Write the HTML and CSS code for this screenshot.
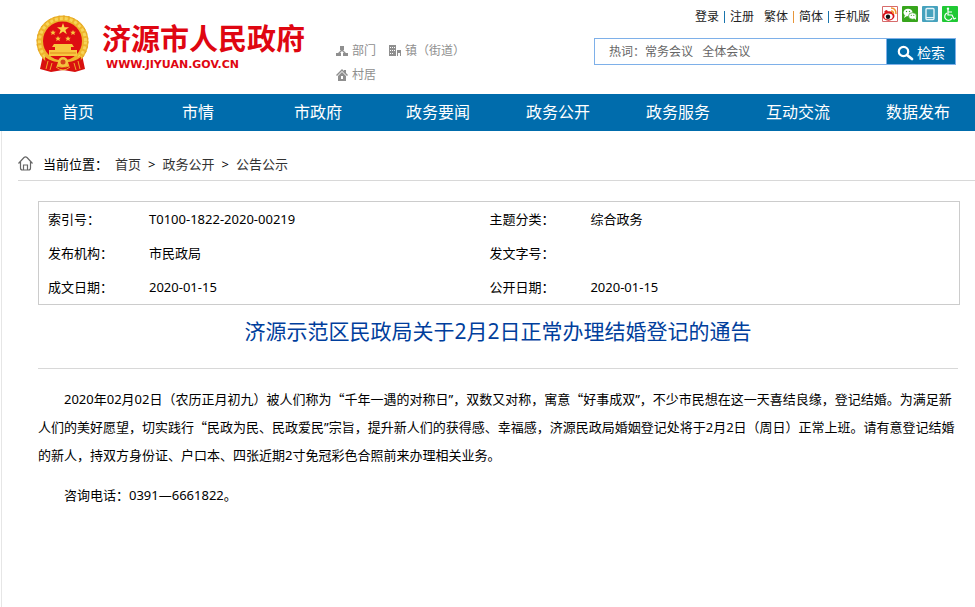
FILE: index.html
```html
<!DOCTYPE html>
<html lang="zh-CN">
<head>
<meta charset="utf-8">
<meta name="viewport" content="width=device-width, initial-scale=1">
<title>济源示范区民政局关于2月2日正常办理结婚登记的通告</title>
<link rel="stylesheet" href="styles.css">
</head>
<body>
<header class="header">
  <a class="brand" href="#">
    <svg class="emblem" viewBox="0 0 54 58" aria-hidden="true">
      <path d="M7 40 L4 54 L15 57 L27 55 L39 57 L49 54 L46 40Z" fill="#d8100f"/>
      <circle cx="26.500" cy="26.500" r="26" fill="#eeb52c"/>
      <circle cx="26.500" cy="26.500" r="23" fill="none" stroke="#f7d458" stroke-width="3" stroke-dasharray="3 2"/>
      <circle cx="26.500" cy="26.500" r="25.500" fill="none" stroke="#e0a228" stroke-width="1" stroke-dasharray="2 3"/>
      <circle cx="26.500" cy="26" r="19.500" fill="#dd0d12"/>
      <path d="M27 8l1.500 4.200h4.500l-3.600 2.700 1.400 4.400-3.800-2.700-3.800 2.700 1.400-4.400-3.600-2.700h4.500z" fill="#fbd34b"/>
      <g fill="#f8c73f">
        <path id="star" d="M17 15l.8 1.700 2 .1-1.500 1.300.5 2-1.800-1-1.800 1 .5-2-1.500-1.300 2-.1z"/>
        <use href="#star" x="20"/><use href="#star" x="5" y="6"/><use href="#star" x="15" y="6"/>
        <path d="M18 29h18l2 3H16zM19 32h16v3H19zM13 35h28v6H13z"/>
      </g>
      <path d="M14 38h26" stroke="#df8b1c" stroke-width="1"/>
      <path d="M8 39c7 6 13 7 19 7s12-1 19-7l-3 9-16 3-16-3z" fill="#efb52e"/>
      <path d="M9 42c5 4 11 5 13 5l-3 9-9-1zM45 42c-5 4-11 5-13 5l3 9 9-1z" fill="#d9110f"/>
      <circle cx="27" cy="47" r="5" fill="#f4c440"/>
      <circle cx="27" cy="47" r="2.500" fill="#d7451a"/>
      <path d="M12 46l-2 8M16 48l-2 7M42 46l2 8M38 48l2 7M20 52q7 6 14 0" fill="none" stroke="#f0ad2b" stroke-width="1"/>
    </svg>
    <span class="brand-text">
      <span class="brand-name">济源市人民政府</span>
      <span class="brand-url">WWW.JIYUAN.GOV.CN</span>
    </span>
  </a>
  <nav class="units">
    <a href="#"><svg viewBox="0 0 12 12" aria-hidden="true"><path d="M4 1h4v4H7l3 3h2v3H7V8h1L6 6 4 8h1v3H0V8h2l3-3H4z"/></svg>部门</a>
    <a href="#"><svg viewBox="0 0 12 12" aria-hidden="true"><path fill-rule="evenodd" d="M0 0h7v11H0zM1 2v1h1V2zm2 0v1h1V2zm2 0v1h1V2zM1 5v1h1V5zm2 0v1h1V5zm2 0v1h1V5zM1 8v1h1V8zm2 0v1h1V8zM8 5h4v6h-1V8H9v3H8z"/></svg>镇（街道）</a>
    <a href="#"><svg viewBox="0 0 12 12" aria-hidden="true"><path fill-rule="evenodd" d="M6 0l2 2V1h2v3l2 2-1 1-5-5-5 5-1-1zM6 3l4 4v5H2V7zM5 7v3h2V7z"/></svg>村居</a>
  </nav>
  <div class="tools">
    <div class="top-links">
      <a href="#">登录</a><i></i><a href="#">注册</a>
      <a class="gap" href="#">繁体</a><i class="orange"></i><a href="#">简体</a><i></i><a href="#">手机版</a>
      <span class="social">
        <a href="#" aria-label="微博"><svg viewBox="0 0 16 16"><path d="M.5.5h15v15H.5z" fill="#fff" stroke="#d76b6b"/><ellipse cx="6.500" cy="10" rx="6" ry="4.700" fill="#d9151d"/><path d="M2 6q3-4 4 0 4-1 4 2" fill="#d9151d"/><ellipse cx="6.500" cy="10.500" rx="4.200" ry="3" fill="#fff"/><circle cx="6" cy="10.800" r="2.200" fill="#111"/><path d="M9 2q5 0 5 6M9 5q2.500 0 2.500 3" fill="none" stroke="#f3932d" stroke-width="1.500"/></svg></a>
        <a href="#" aria-label="微信"><svg viewBox="0 0 16 16"><rect width="16" height="16" rx="1" fill="#37a51c"/><path d="M3 9l-1 3 3-2z" fill="#fff"/><ellipse cx="6" cy="6.500" rx="4.500" ry="3.800" fill="#fff"/><ellipse cx="10.500" cy="10" rx="4" ry="3.300" fill="#fff" stroke="#37a51c" stroke-width=".7"/><path d="M12 12l2 2v-3z" fill="#fff"/><g fill="#37a51c"><circle cx="4.500" cy="5.500" r=".7"/><circle cx="7.500" cy="5.500" r=".7"/><circle cx="9.300" cy="9.300" r=".6"/><circle cx="11.800" cy="9.300" r=".6"/></g></svg></a>
        <a href="#" aria-label="手机"><svg viewBox="0 0 16 16"><rect width="16" height="16" rx="1" fill="#46a2bd"/><rect x="4" y="2.500" width="8" height="11" rx="1" fill="none" stroke="#e5f4f8" stroke-width="1.400"/><path d="M4 11.500h8" stroke="#e5f4f8"/></svg></a>
        <a href="#" aria-label="无障碍"><svg viewBox="0 0 16 16"><rect width="16" height="16" rx="1" fill="#1fc934"/><circle cx="6" cy="2.800" r="1.200" fill="#fff"/><path d="M6 4v5h4l2 4 2-1M6 6h4M5 7a3.800 3.800 0 1 0 5 5" fill="none" stroke="#fff" stroke-width="1.200"/></svg></a>
      </span>
    </div>
    <form class="search">
      <input type="text" aria-label="站内检索" placeholder="热词：常务会议   全体会议">
      <button type="button"><svg viewBox="0 0 17 16" aria-hidden="true"><circle cx="6.500" cy="6.500" r="4.700" fill="none" stroke="#fff" stroke-width="2.200"/><path d="M10 10l5 4" stroke="#fff" stroke-width="2.800" stroke-linecap="round"/></svg>检索</button>
    </form>
  </div>
</header>

<nav class="main-nav">
  <a href="#">首页</a><a href="#">市情</a><a href="#">市政府</a><a href="#">政务要闻</a><a href="#">政务公开</a><a href="#">政务服务</a><a href="#">互动交流</a><a href="#">数据发布</a>
</nav>

<main class="page">
  <nav class="crumbs">
    <svg viewBox="0 0 15 15" aria-hidden="true"><path d="M.5 7.500L6 1.500q1.500-1.300 3 0l5.500 6M2.500 6v6q0 2 2 2h6q2 0 2-2V6M5.500 13.500V9h4v4.500" fill="none" stroke="#666" stroke-width="1.200"/></svg>
    <span class="here">当前位置：</span>
    <a href="#">首页</a><b>&gt;</b><a href="#">政务公开</a><b>&gt;</b><a href="#">公告公示</a>
  </nav>
  <article class="article">
    <table class="meta">
      <colgroup><col class="label"><col class="value"><col class="label"><col></colgroup>
      <tr><th>索引号：</th><td>T0100-1822-2020-00219</td><th>主题分类：</th><td>综合政务</td></tr>
      <tr><th>发布机构：</th><td>市民政局</td><th>发文字号：</th><td></td></tr>
      <tr><th>成文日期：</th><td>2020-01-15</td><th>公开日期：</th><td>2020-01-15</td></tr>
    </table>
    <h1>济源示范区民政局关于2月2日正常办理结婚登记的通告</h1>
    <div class="content">
      <p>2020年02月02日（农历正月初九）被人们称为<span class="quote">“</span>千年一遇的对称日”，双数又对称，寓意<span class="quote">“</span>好事成双”，不少市民想在这一天喜结良缘，登记结婚。为满足新人们的美好愿望，切实践行<span class="quote">“</span>民政为民、民政爱民”宗旨，提升新人们的获得感、幸福感，济源民政局婚姻登记处将于2月2日（周日）正常上班。请有意登记结婚的新人，持双方身份证、户口本、四张近期2寸免冠彩色合照前来办理相关业务。</p>
      <p>咨询电话：0391—6661822。</p>
    </div>
  </article>
</main>
</body>
</html>
```
FILE: styles.css
```css
* { box-sizing: border-box; }
body {
  margin: 0;
  background: #fff;
  color: #000;
  font: 13px/20px "Noto Sans", "Noto Sans CJK SC", sans-serif;
  text-spacing-trim: space-all;
  overflow-x: hidden;
}
a { color: inherit; text-decoration: none; }

.header { display: flex; align-items: flex-start; height: 94px; padding: 0 19px 0 36px; }
.brand { display: flex; gap: 12px; padding-top: 15px; color: #df0611; flex: none; }
.emblem { width: 54px; height: 58px; }
.brand-text { display: flex; flex-direction: column; padding-top: 3px; }
.brand-name { font: bold 29px/38px "Noto Sans CJK SC", sans-serif; }
.brand-url { padding-left: 4px; font: bold 11px/18px "DejaVu Sans", sans-serif; }

.units { display: flex; flex-wrap: wrap; gap: 0 13px; width: 152px; margin-left: 31px; padding-top: 39px; color: #8f8f8f; font-size: 12px; line-height: 24px; flex: none; }
.units a { display: flex; align-items: center; gap: 4px; white-space: nowrap; }
.units svg { width: 12px; height: 12px; fill: #8f8f8f; }

.tools { width: 362px; margin-left: auto; }
.top-links { display: flex; align-items: center; justify-content: flex-end; height: 32px; margin-right: -2px; padding-top: 1px; color: #222; font-size: 12px; }
.top-links i { width: 1px; height: 12px; margin: 0 5px; background: #1874ad; }
.top-links .orange { background: #e8963a; }
.top-links .gap { margin-left: 10px; }
.social { display: flex; gap: 4px; margin: 0 0 5px 12px; }
.social a, .social svg { display: block; width: 16px; height: 16px; }
.search { display: flex; height: 27px; margin-top: 6px; border: 1px solid #7eb0e9; }
.search input { flex: 1; min-width: 0; padding: 0 14px; border: 0; background: #fff; color: #666; font: inherit; font-size: 12px; }
.search input::placeholder { color: #666; opacity: 1; white-space: pre; }
.search button { display: flex; align-items: center; justify-content: center; gap: 3px; width: 69px; padding: 2px 0 0; border: 0; border-left: 1px solid #7eb0e9; background: #006cac; color: #fff; font: inherit; font-size: 14px; }
.search svg { width: 17px; height: 16px; }

.main-nav { display: flex; height: 37px; padding-left: 18px; overflow: hidden; background: #006cac; color: #fff; font-size: 16px; line-height: 37px; }
.main-nav a { flex: 0 0 120px; text-align: center; }

.page { min-height: 476px; margin-left: 1px; border-left: 1px solid #e6e6e6; padding-left: 16px; }
.crumbs { display: flex; align-items: center; height: 50px; padding-top: 16px; border-bottom: 1px solid #d8d8d8; color: #333; }
.crumbs svg { width: 15px; height: 15px; margin-right: 10px; }
.crumbs .here { margin-right: 7px; color: #000; }
.crumbs b { margin: 0 7px; color: #000; font-weight: normal; }

.article { padding: 20px 15px 0 20px; }
.meta { width: 100%; border: 1px solid #ccc; border-collapse: separate; border-spacing: 0; table-layout: fixed; }
.meta th, .meta td { height: 34px; padding: 0 0 0 9px; text-align: left; font-weight: normal; }
.meta .label { width: 101px; }
.meta .value { width: 37%; }
h1 { margin: 0 2px 0 0; padding: 10px 0 21px; border-bottom: 1px solid #d8d8d8; color: #003e9c; font-size: 21px; line-height: 32px; font-weight: normal; text-align: center; }
.content { line-height: 28px; padding-top: 16px; }
.content p { margin: 0 0 12px; text-indent: 2em; }
.quote { font-family: "Noto Sans CJK SC", sans-serif; line-height: 1; }
```
